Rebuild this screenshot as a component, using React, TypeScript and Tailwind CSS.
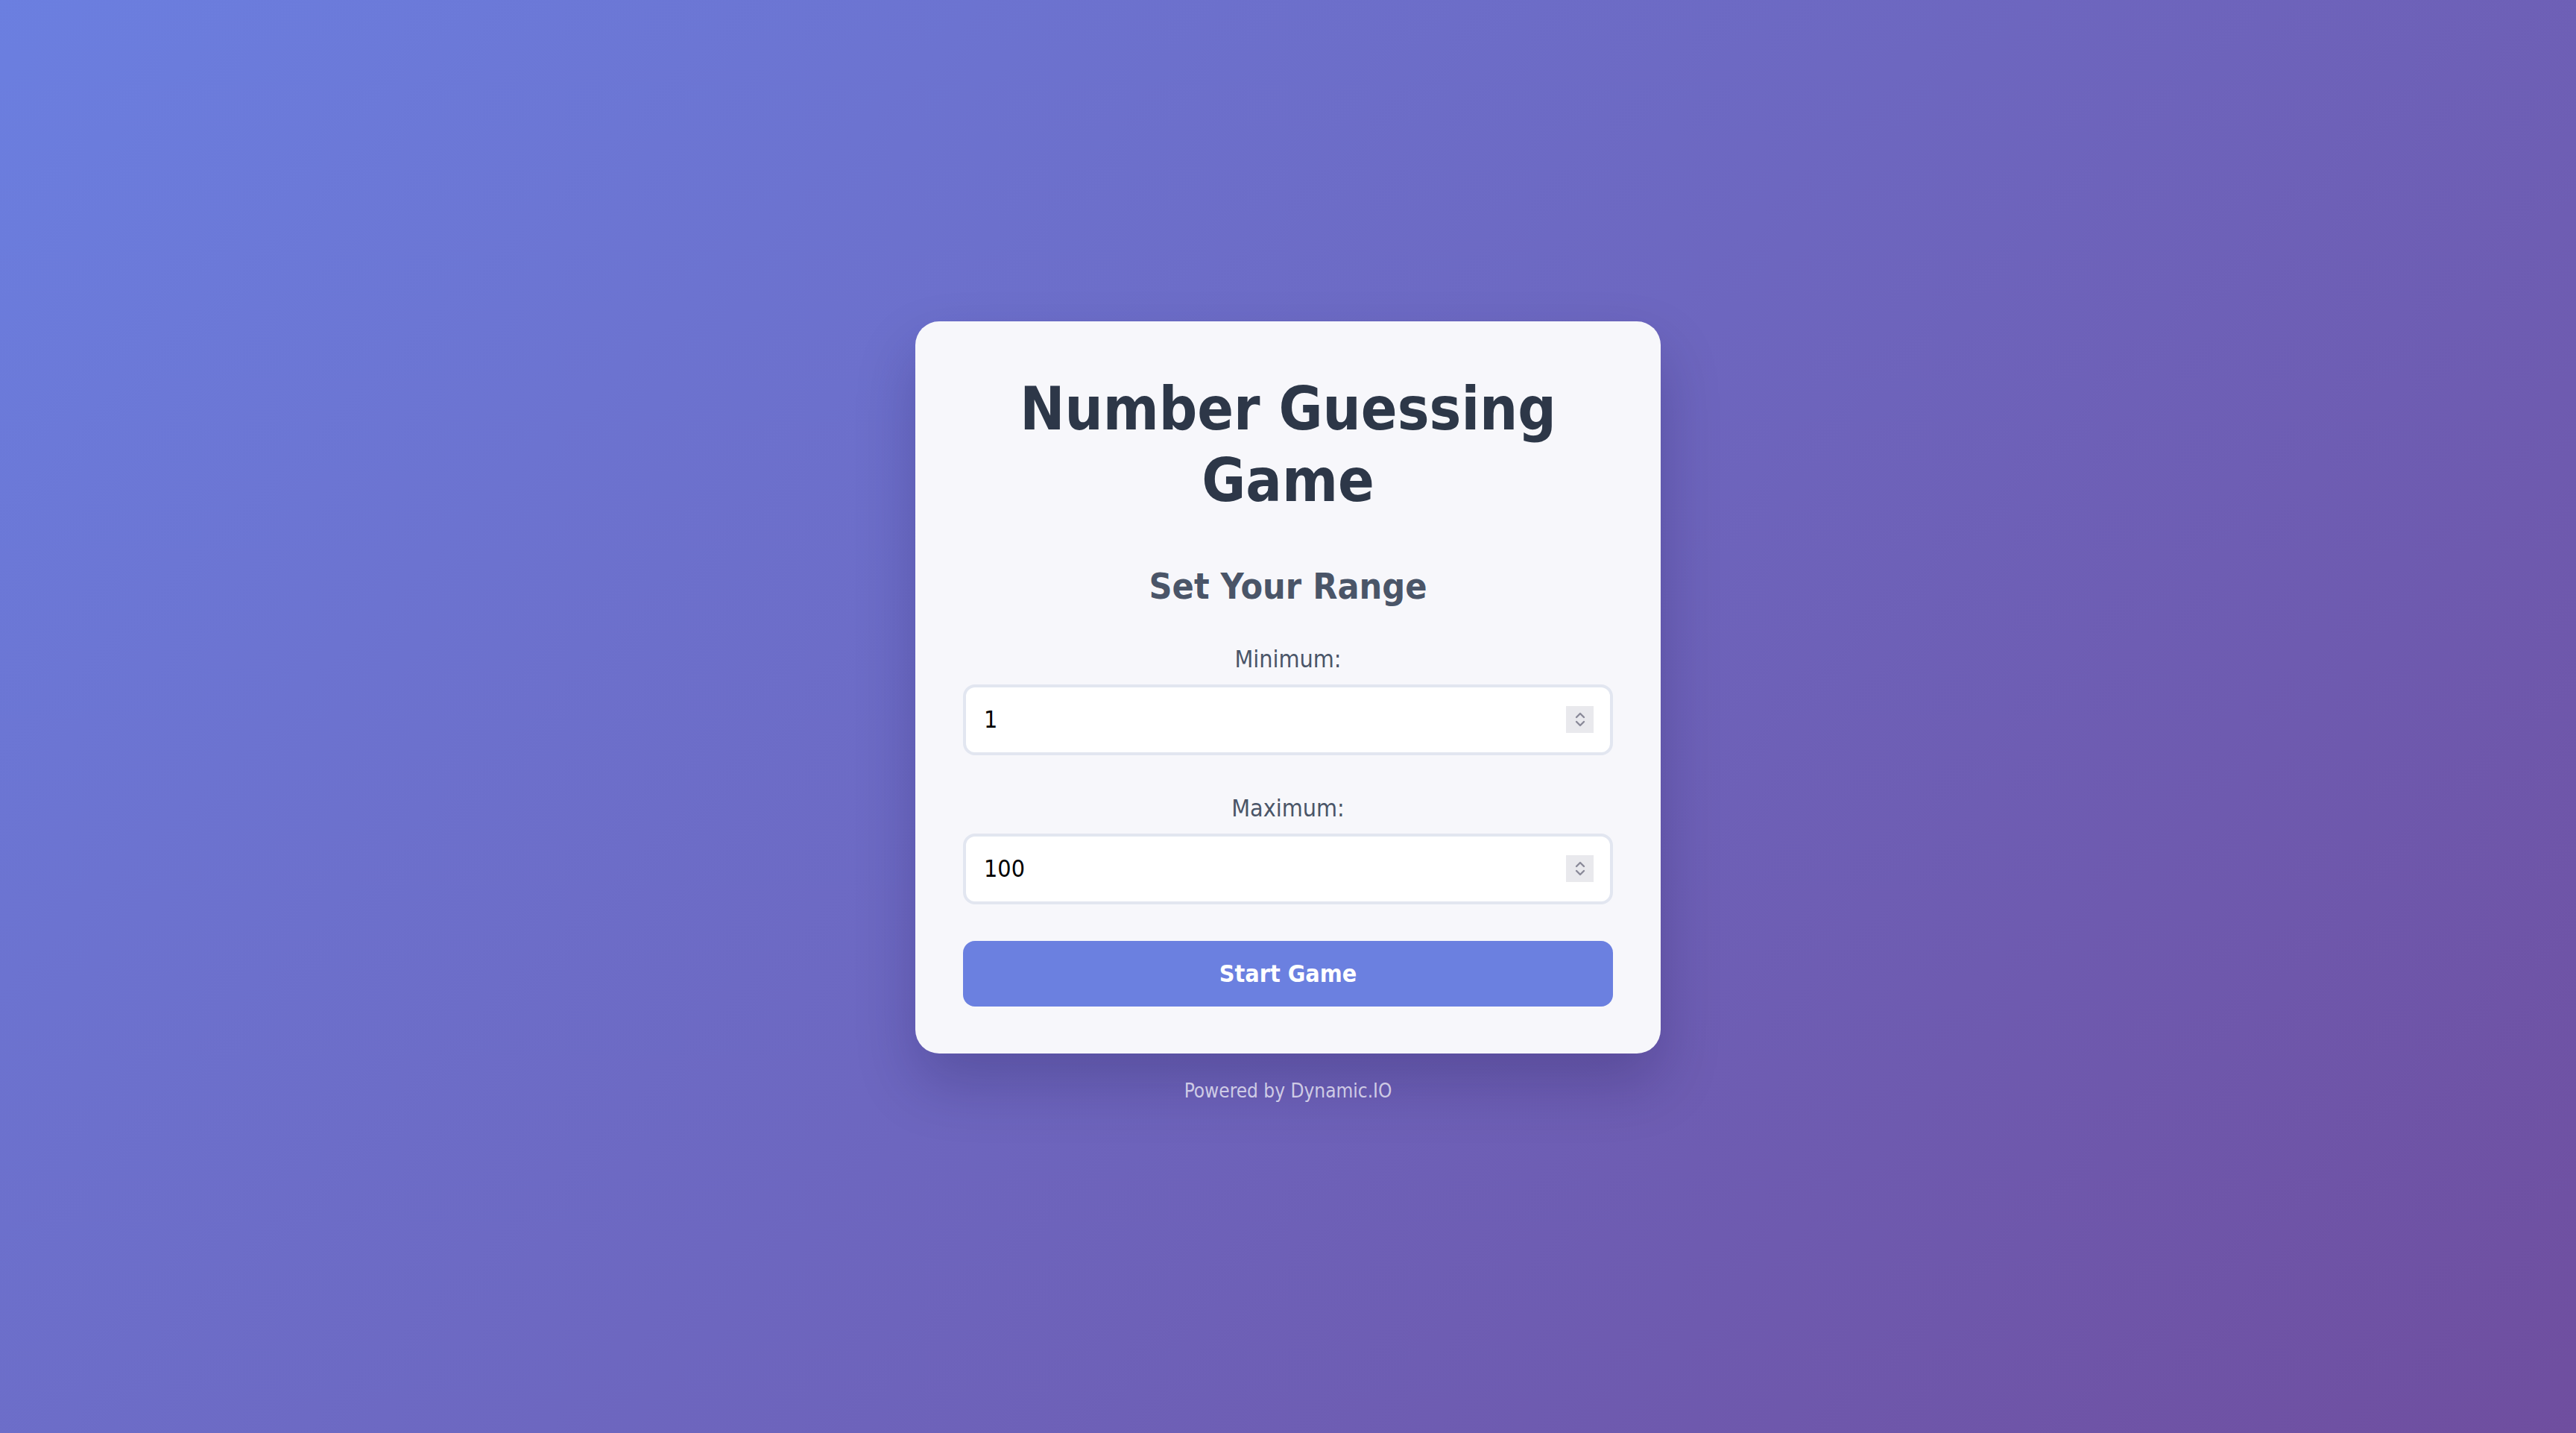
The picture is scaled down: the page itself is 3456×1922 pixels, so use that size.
import React from 'react';

const font = { fontFamily: '"DejaVu Sans Condensed", "DejaVu Sans", Tahoma, sans-serif' };

interface RangeFieldProps {
  label: string;
  value: string;
}

const Spinner: React.FC = () => (
  <div className="flex h-[36px] w-[37px] flex-col items-center justify-center bg-[#e9e9ed]">
    <svg width="16" height="12" viewBox="0 0 16 12" fill="none" stroke="#8a8a99" strokeWidth="2.4" strokeLinecap="round" strokeLinejoin="round">
      <path d="M3 9l5-5 5 5" />
    </svg>
    <svg width="16" height="12" viewBox="0 0 16 12" fill="none" stroke="#8a8a99" strokeWidth="2.4" strokeLinecap="round" strokeLinejoin="round">
      <path d="M3 3l5 5 5-5" />
    </svg>
  </div>
);

const RangeField: React.FC<RangeFieldProps> = ({ label, value }) => (
  <div className="flex flex-col">
    <label className="mb-[15px] text-center text-[32px] leading-[37px] text-[#4a5568]">{label}</label>
    <div className="flex h-[95px] items-center rounded-[16px] border-[4px] border-[#e2e6f0] bg-white pl-[24px] pr-[22px]">
      <input
        type="text"
        defaultValue={value}
        className="min-w-0 flex-1 bg-transparent text-[32px] text-black outline-none font-stretch-condensed"
        style={font}
      />
      <Spinner />
    </div>
  </div>
);

export default function App() {
  return (
    <div
      className="flex h-screen w-full flex-col items-center justify-center bg-[linear-gradient(135deg,#6b7fe0_0%,#6f4e9f_100%)] font-stretch-condensed"
      style={font}
    >
      <div className="w-[1000px] rounded-[32px] bg-[#f7f7fb] px-[64px] pb-[63px] pt-[70px] shadow-[0_40px_80px_rgba(20,10,60,0.22)]">
        <h1 className="text-center text-[80px] font-bold leading-[96px] text-[#2d3748]">
          Number Guessing
          <br />
          Game
        </h1>
        <h2 className="mt-[65px] text-center text-[48px] font-bold leading-[56px] text-[#4a5568]">Set Your Range</h2>
        <div className="mt-[52px] flex flex-col gap-[53px]">
          <RangeField label="Minimum:" value="1" />
          <RangeField label="Maximum:" value="100" />
        </div>
        <button className="mt-[49px] h-[88px] w-full rounded-[16px] bg-[#6b80e0] text-[32px] font-bold text-white">
          Start Game
        </button>
      </div>
      <p className="mb-[14px] mt-[35px] text-[26px] leading-[30px] text-white/70">Powered by Dynamic.IO</p>
    </div>
  );
}
